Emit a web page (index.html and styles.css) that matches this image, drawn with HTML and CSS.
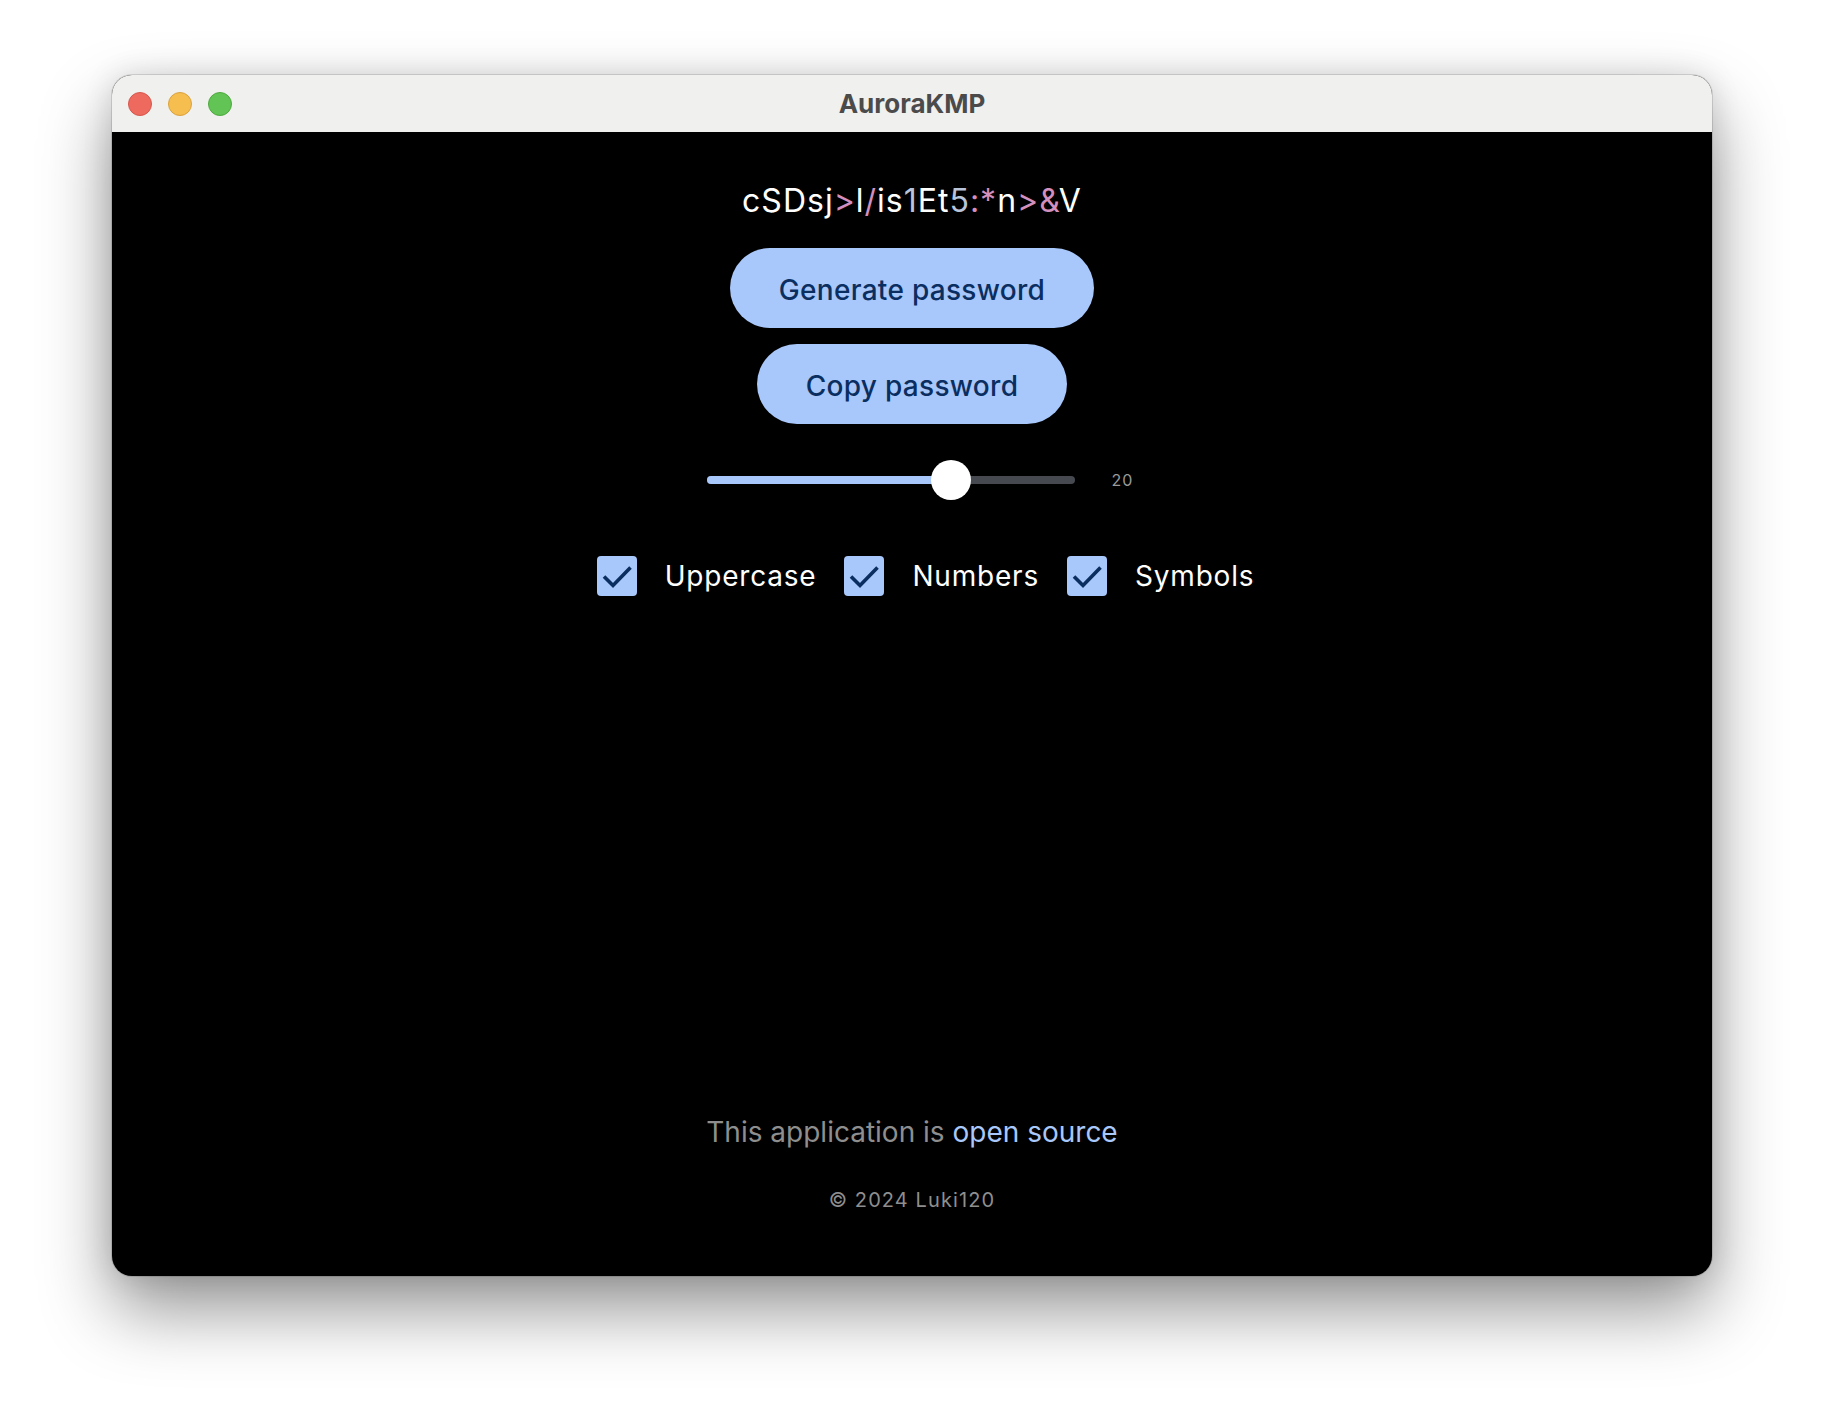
FILE: index.html
```html
<!DOCTYPE html>
<html lang="en">
<head>
    <meta charset="UTF-8">
    <meta name="viewport" content="width=device-width, initial-scale=1.0">
    <title>AuroraKMP</title>
    <link rel="stylesheet" href="styles.css">
</head>
<body>
    <div class="window">
        <div class="titlebar">
            <div class="lights">
                <span class="light red"></span>
                <span class="light yellow"></span>
                <span class="light green"></span>
            </div>
            <div class="title">AuroraKMP</div>
            <div></div>
        </div>

        <main class="content">
            <div class="password">cSDsj<span class="sym">&gt;</span>l<span class="sym">/</span>is<span class="num">1</span>Et<span class="num">5</span><span class="sym">:*</span>n<span class="sym">&gt;&amp;</span>V</div>

            <button class="pill-btn">Generate password</button>
            <button class="pill-btn copy-btn">Copy password</button>

            <div class="length-row">
                <div class="slider">
                    <div class="slider-fill" style="width: 244px"></div>
                    <div class="slider-thumb" style="left: 244px"></div>
                </div>
                <span class="length-value">20</span>
            </div>

            <div class="options">
                <label class="option">
                    <span class="checkbox">
                        <svg viewBox="0 0 40 40" width="40" height="40"><path d="M7 20.5 L16 29.5 L33.5 11.5" fill="none" stroke="#0b2e60" stroke-width="3.6"/></svg>
                    </span>
                    <span class="option-label">Uppercase</span>
                </label>
                <label class="option">
                    <span class="checkbox">
                        <svg viewBox="0 0 40 40" width="40" height="40"><path d="M7 20.5 L16 29.5 L33.5 11.5" fill="none" stroke="#0b2e60" stroke-width="3.6"/></svg>
                    </span>
                    <span class="option-label">Numbers</span>
                </label>
                <label class="option">
                    <span class="checkbox">
                        <svg viewBox="0 0 40 40" width="40" height="40"><path d="M7 20.5 L16 29.5 L33.5 11.5" fill="none" stroke="#0b2e60" stroke-width="3.6"/></svg>
                    </span>
                    <span class="option-label">Symbols</span>
                </label>
            </div>

            <footer class="footer">
                <p class="source">This application is <a href="#">open source</a></p>
                <p class="copyright">© 2024 Luki120</p>
            </footer>
        </main>
    </div>
</body>
</html>
```

FILE: styles.css
```css
html, body {
    margin: 0;
    height: 1424px;
    overflow: hidden;
}

body {
    background-color: #ffffff;
    padding-top: 75px;
    box-sizing: border-box;
    font-family: Inter, "Liberation Sans", sans-serif;
}

.window {
    width: 1600px;
    height: 1201px;
    margin: 0 auto;
    border-radius: 20px;
    overflow: hidden;
    background-color: #000;
    display: flex;
    flex-direction: column;
    box-shadow: 0 0 0 1px rgba(0, 0, 0, 0.12), 0 34px 70px rgba(0, 0, 0, 0.42), 0 0 30px rgba(0, 0, 0, 0.12);
}

/* barra de titulo */
.titlebar {
    height: 57px;
    background-color: #f0f0ee;
    display: grid;
    grid-template-columns: 1fr auto 1fr;
    align-items: center;
    flex-shrink: 0;
}

.lights {
    display: flex;
    gap: 16px;
    padding-left: 16px;
    padding-top: 1px;
}

.light {
    width: 22px;
    height: 22px;
    border-radius: 50%;
    border: 1px solid;
}

.light.red {
    background-color: #ee6a5f;
    border-color: #d6574d;
}

.light.yellow {
    background-color: #f6be4f;
    border-color: #d9a23f;
}

.light.green {
    background-color: #61c454;
    border-color: #4fa83f;
}

.title {
    font-weight: 700;
    font-size: 26px;
    color: #4b4b4b;
}

/* conteudo */
.content {
    flex: 1;
    display: flex;
    flex-direction: column;
    align-items: center;
}

.password {
    margin-top: 49px;
    font-size: 32px;
    line-height: 40px;
    letter-spacing: 1px;
    color: #ffffff;
}

.password .sym {
    color: #d38fbd;
}

.password .num {
    color: #b7c4da;
}

.pill-btn {
    margin-top: 27px;
    height: 80px;
    padding: 4px 49px 0;
    border: none;
    border-radius: 40px;
    background-color: #a8c7fa;
    color: #0b2e60;
    font-family: Inter, "Liberation Sans", sans-serif;
    font-weight: 500;
    font-size: 28px;
    letter-spacing: 0.3px;
    cursor: pointer;
}

.copy-btn {
    margin-top: 16px;
}

.length-row {
    margin-top: 36px;
    height: 40px;
    display: flex;
    align-items: center;
    gap: 37px;
    padding-left: 16px;
}

.slider {
    position: relative;
    width: 368px;
    height: 8px;
    border-radius: 4px;
    background-color: #464950;
}

.slider-fill {
    height: 8px;
    border-radius: 4px;
    background-color: #a8c7fa;
}

.slider-thumb {
    position: absolute;
    top: -16px;
    width: 40px;
    height: 40px;
    margin-left: -20px;
    border-radius: 50%;
    background-color: #ffffff;
}

.length-value {
    font-size: 16px;
    letter-spacing: 1px;
    color: #9a9a9a;
}

.options {
    margin-top: 56px;
    display: flex;
    align-items: center;
    padding-left: 27px;
}

.option {
    display: flex;
    align-items: center;
    cursor: pointer;
}

.checkbox {
    width: 40px;
    height: 40px;
    border-radius: 4px;
    background-color: #a8c7fa;
    margin-right: 28px;
}

.checkbox svg {
    display: block;
}

.option-label {
    font-size: 28px;
    letter-spacing: 0.8px;
    color: #ffffff;
    margin-right: 28px;
}

.option:last-child .option-label {
    margin-right: 0;
}

/* rodape */
.footer {
    margin-top: auto;
    padding-bottom: 61px;
    display: flex;
    flex-direction: column;
    align-items: center;
    color: #8e8e8e;
}

.footer p {
    margin: 0;
}

.source {
    font-size: 28px;
    line-height: 40px;
}

.source a {
    color: #a8c7fa;
    text-decoration: none;
}

.copyright {
    margin-top: 33px !important;
    font-size: 20px;
    line-height: 30px;
    letter-spacing: 1.1px;
}
```
